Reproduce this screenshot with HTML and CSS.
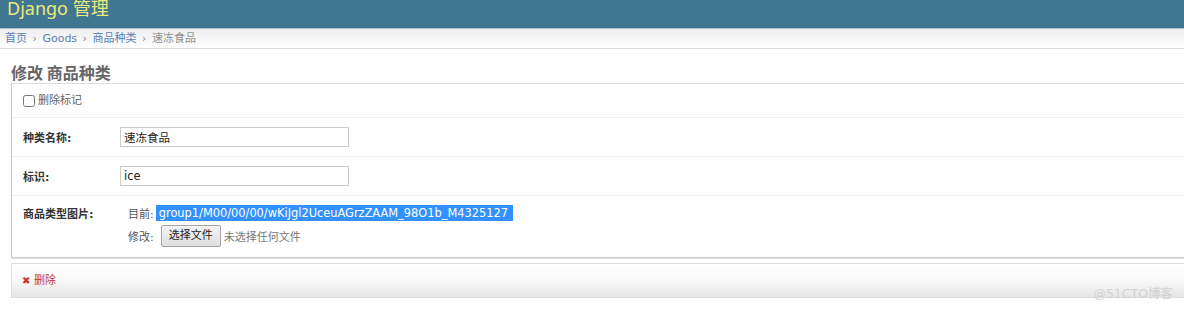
FILE: index.html
```html
<!DOCTYPE html>
<html lang="zh-CN">
<head>
  <meta charset="UTF-8">
  <title>修改 商品种类 | Django 站点管理员</title>
  <link rel="stylesheet" href="styles.css">
</head>
<body>
  <div id="header">
    <h1 class="branding">Django 管理</h1>
  </div>

  <div class="breadcrumbs">
    <a href="#">首页</a> <span class="sep">›</span>
    <a href="#">Goods</a> <span class="sep">›</span>
    <a href="#">商品种类</a> <span class="sep">›</span>
    <span class="current">速冻食品</span>
  </div>

  <div id="content">
    <h1 class="page-title">修改 商品种类</h1>

    <form>
      <fieldset class="module aligned">
        <div class="form-row">
          <label class="checkbox-row"><input type="checkbox"> <span>删除标记</span></label>
        </div>
        <div class="form-row">
          <label class="required">种类名称:</label>
          <input class="vTextField" type="text" value="速冻食品">
        </div>
        <div class="form-row">
          <label class="required">标识:</label>
          <input class="vTextField" type="text" value="ice">
        </div>
        <div class="form-row file-row">
          <label class="required">商品类型图片:</label>
          <div class="file-upload">
            <div class="file-line">目前:<a href="#" class="selected">group1/M00/00/00/wKiJgl2UceuAGrzZAAM_98O1b_M4325127</a></div>
            <div class="file-line">修改:<span class="file-button">选择文件</span><span class="file-none">未选择任何文件</span></div>
          </div>
        </div>
      </fieldset>

      <div class="submit-row">
        <a href="#" class="deletelink"><span class="x">✖</span> 删除</a>
      </div>
    </form>
  </div>

  <div class="watermark">@51CTO博客</div>
</body>
</html>
```

FILE: styles.css
```css
* {
  margin: 0;
  padding: 0;
  box-sizing: border-box;
}

html, body {
  overflow: hidden;
}

body {
  font-family: "DejaVu Sans", "Noto Sans CJK SC", sans-serif;
  font-size: 11px;
  color: #333;
  background: #fff;
  position: relative;
  height: 311px;
}

a {
  text-decoration: none;
}

/* Header */
#header {
  height: 29px;
  background: #417690;
  border-bottom: 1px solid #a9c3d0;
  padding: 0 7px;
  overflow: hidden;
}

.branding {
  font-family: "Noto Sans", "Noto Sans CJK SC", sans-serif;
  font-size: 18px;
  line-height: 18px;
  font-weight: 400;
  color: #ecea7a;
  margin-top: -1px;
}

/* Breadcrumbs */
.breadcrumbs {
  height: 20px;
  line-height: 19px;
  padding: 0 5px;
  background: linear-gradient(#eeeeee, #ffffff);
  border-bottom: 1px solid #dcdcdc;
  color: #999;
}

.breadcrumbs a {
  color: #5b80b2;
}

.breadcrumbs .sep {
  color: #8a8a8a;
  margin: 0 2px;
}

.breadcrumbs .current {
  color: #8f8f8f;
}

/* Content */
#content {
  padding: 0 0 0 11px;
}

.page-title {
  font-family: "Noto Sans CJK SC", sans-serif;
  font-size: 16px;
  line-height: 20px;
  font-weight: 700;
  color: #666;
  margin: 13px 0 1px;
}

.module {
  border: 1px solid #cccccc;
  border-top-color: #dddddd;
  margin-right: -14px;
  box-shadow: 0 1px 0 #e2e2e2;
}

.form-row {
  display: flex;
  align-items: center;
  padding: 9px 11px;
  border-bottom: 1px solid #eeeeee;
}

.form-row:first-child {
  padding: 10px 11px;
}

.form-row:last-child {
  border-bottom: none;
  align-items: flex-start;
  padding: 9px 11px 10px;
}

.form-row > label {
  width: 97px;
  font-weight: 700;
  color: #333;
}

.file-row > label {
  line-height: 16px;
  margin-top: 2px;
}

.form-row > .checkbox-row {
  display: flex;
  align-items: center;
  width: auto;
  line-height: 13px;
  font-weight: 400;
  color: #666;
}

.checkbox-row input {
  width: 12px;
  height: 12px;
  margin: 0 3px 0 0;
}

.vTextField {
  width: 229px;
  height: 20px;
  border: 1px solid #cccccc;
  padding: 0 3px;
  font-family: "DejaVu Sans", "Noto Sans CJK SC", sans-serif;
  font-size: 11.5px;
  color: #222;
  background: #fff;
}

/* File widget */
.file-upload {
  margin-left: 8px;
  color: #555;
}

.file-line {
  display: flex;
  align-items: center;
}

.file-line + .file-line {
  margin-top: 4px;
}

.selected {
  background: #3391ff;
  color: #fff;
  font-size: 11.4px;
  line-height: 16px;
  padding: 0 5px 0 3px;
  margin-left: 2px;
}

.file-button {
  display: inline-block;
  height: 22px;
  line-height: 20px;
  padding: 0 7px;
  margin-left: 7px;
  border: 1px solid #a6a6a6;
  border-radius: 2px;
  background: linear-gradient(#f4f4f4, #dedede);
  color: #222;
}

.file-none {
  margin-left: 3px;
  color: #777;
}

/* Submit row */
.submit-row {
  margin-top: 5px;
  margin-right: -14px;
  height: 35px;
  padding: 0 10px;
  display: flex;
  align-items: center;
  border: 1px solid #dddddd;
  background: linear-gradient(#ffffff 0%, #fafafa 45%, #e6e6e6 100%);
}

.deletelink {
  color: #c33a3a;
  line-height: 13px;
}

.deletelink .x {
  color: #d03030;
  font-size: 10px;
}

.watermark {
  position: absolute;
  right: 11px;
  bottom: 9px;
  font-family: "DejaVu Sans", "Noto Sans CJK SC", sans-serif;
  font-size: 12.5px;
  color: #d2d2d2;
}
```
